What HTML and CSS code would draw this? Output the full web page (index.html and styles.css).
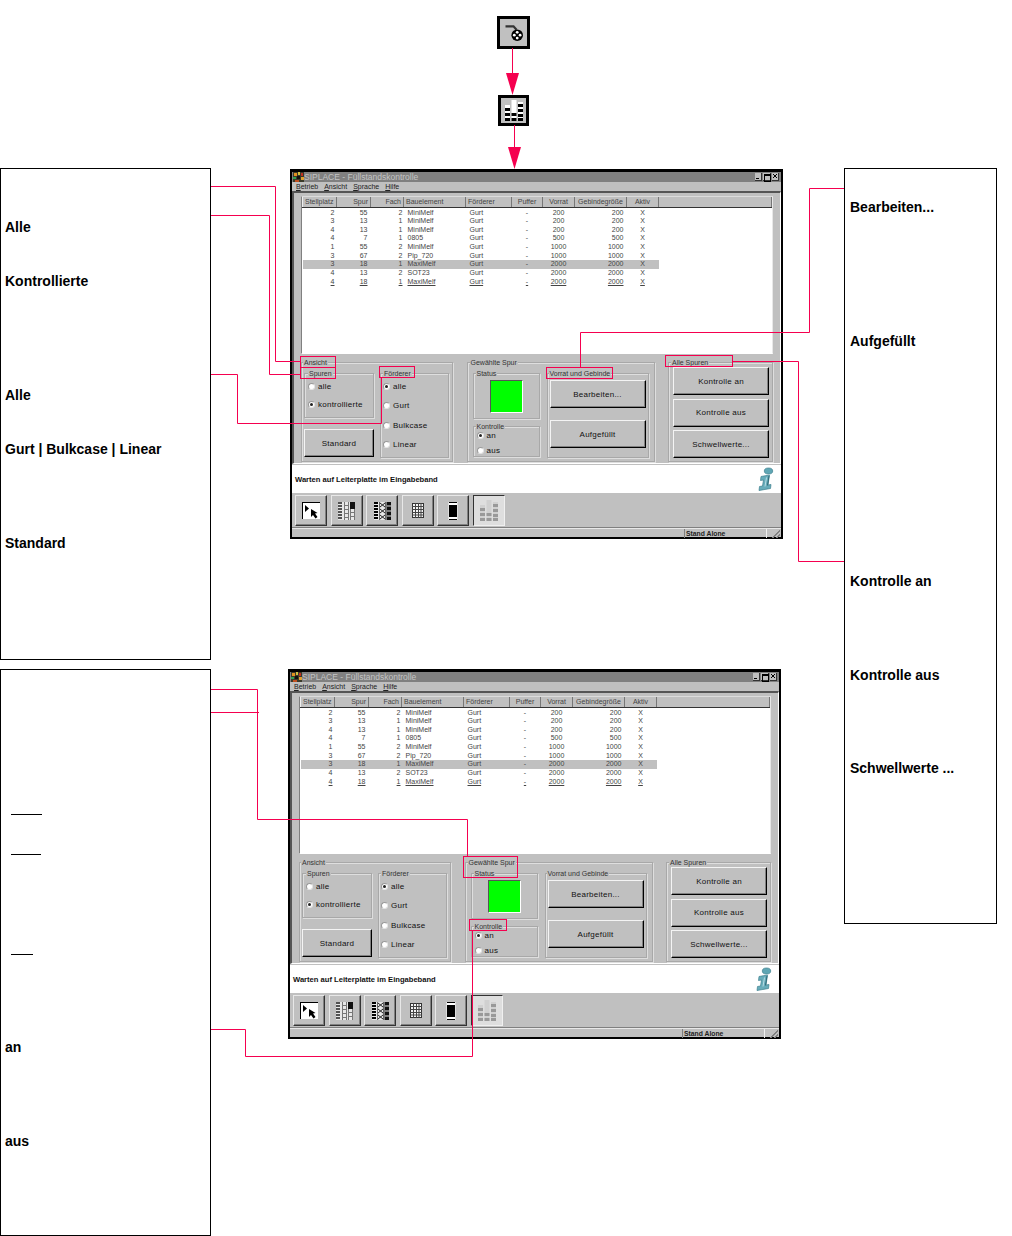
FILE: index.html
```html
<!DOCTYPE html>
<html lang="de">
<head>
    <meta charset="UTF-8">
    <meta name="viewport" content="width=device-width, initial-scale=1.0">
    <title>SIPLACE - Füllstandskontrolle</title>
    <link rel="stylesheet" href="styles.css">
</head>
<body>
<svg class="icon-defs" width="0" height="0">
    <symbol id="icon-app" viewBox="0 0 11 10">
        <rect width="11" height="10" fill="#3a3a2a"/>
        <rect x="1" y="1" width="3" height="3" fill="#e09020"/>
        <rect x="5" y="0" width="2" height="3" fill="#d0c040"/>
        <rect x="8" y="1" width="2" height="3" fill="#c03020"/>
        <rect x="0" y="5" width="3" height="2" fill="#30a050"/>
        <rect x="4" y="4" width="3" height="3" fill="#101010"/>
        <rect x="8" y="5" width="3" height="3" fill="#e0a030"/>
        <rect x="2" y="8" width="4" height="2" fill="#c05020"/>
    </symbol>
    <symbol id="icon-select" viewBox="0 0 18 17">
        <rect width="18" height="17" fill="#fff"/>
        <rect width="18" height="1" fill="#000"/>
        <rect width="1" height="17" fill="#000"/>
        <polygon points="3,3 3,10 7,6.5" fill="#000"/>
        <polygon points="9,7 9,15 11,13 13.5,16.5 15.5,15 13,11.5 15.5,11" fill="#000"/>
    </symbol>
    <symbol id="icon-tracks" viewBox="0 0 17 18">
        <rect width="17" height="18" fill="#e8e8e8"/>
        <path d="M0 1h4M0 4h4M0 7h4M0 10h4M0 13h4M0 16h4" stroke="#222" stroke-width="1.600"/>
        <path d="M6.500 0v18M10.500 0v18M6 3.500h5M6 7.500h5M6 11.500h5M6 15.500h5" stroke="#777" fill="none"/>
        <rect x="12" y="0" width="5" height="7" fill="#111"/>
        <path d="M12.500 7v11M16.500 7v11M12 10.500h5M12 14.500h5" stroke="#777" fill="none"/>
    </symbol>
    <symbol id="icon-tracks-x" viewBox="0 0 17 18">
        <rect width="17" height="18" fill="#e8e8e8"/>
        <path d="M0 1h4M0 4h4M0 7h4M0 10h4M0 13h4M0 16h4" stroke="#000" stroke-width="2"/>
        <path d="M6 1l5 4M11 1l-5 4M6 7l5 4M11 7l-5 4M6 13l5 4M11 13l-5 4" stroke="#222"/>
        <path d="M5.500 0v18M11.500 0v18" stroke="#666"/>
        <rect x="12.500" y="0" width="4.500" height="18" fill="#111"/>
        <path d="M13 4h4M13 9h4M13 14h4" stroke="#e8e8e8"/>
    </symbol>
    <symbol id="icon-grid" viewBox="0 0 12 15">
        <rect x=".5" y=".5" width="11" height="14" fill="#f4f4f4" stroke="#333"/>
        <path d="M3.500 0v15M6.500 0v15M9 0v15M0 3.500h12M0 6.500h12M0 9.500h12M0 12h12" stroke="#444" fill="none"/>
    </symbol>
    <symbol id="icon-reel" viewBox="0 0 10 18">
        <rect width="10" height="18" fill="#000"/>
        <rect x="1" y="1" width="8" height="2" fill="#fff"/>
        <rect x="1" y="15" width="8" height="2" fill="#fff"/>
        <rect x="0" y="0" width="1" height="18" fill="#ddd"/>
        <rect x="9" y="0" width="1" height="18" fill="#ddd"/>
    </symbol>
    <symbol id="icon-chart" viewBox="0 0 18 21">
        <rect class="chart-col" x="0" y="5" width="5" height="16"/>
        <rect class="chart-col" x="6.500" y="0" width="5" height="21"/>
        <rect class="chart-col" x="13" y="2" width="5" height="19"/>
        <path class="chart-bar" d="M0 8h5v3H0zM0 13h5v3H0zM0 18h5v3H0zM6.500 13h5v3h-5zM6.500 18h5v3h-5zM13 4h5v3h-5zM13 9h5v3h-5zM13 14h5v3h-5zM13 18h5v3h-5z"/>
    </symbol>
    <symbol id="icon-wheel" viewBox="0 0 24 20">
        <path d="M3.500 3.300h8l3 3.500" fill="none" stroke="#333" stroke-width="2.200"/>
        <circle cx="15.200" cy="12.200" r="5.800" fill="#000"/>
        <circle cx="15.200" cy="9.300" r="1.400" fill="#fff"/>
        <circle cx="15.200" cy="15.100" r="1.400" fill="#fff"/>
        <circle cx="12.300" cy="12.200" r="1.400" fill="#fff"/>
        <circle cx="18.100" cy="12.200" r="1.400" fill="#fff"/>
    </symbol>
    <symbol id="icon-info" viewBox="0 0 18 24">
        <ellipse cx="11.500" cy="4" rx="4.200" ry="3" fill="#5fa6b4" stroke="#3d7f8e" stroke-width=".7"/>
        <path d="M4 9.500l8.500-1.500-1.500 10 3-.5-.5 4L2 23.500l.5-4 3-.5 1-6-3 .5z" fill="#67acba" stroke="#3d7f8e" stroke-width=".7"/>
        <path d="M9.500 10.500l-1.500 9" stroke="#b8dde4" fill="none"/>
        <path d="M12 9l-1.500 9.500" stroke="#2f6a78" fill="none"/>
    </symbol>
</svg>

<main class="page">
    <div class="tile tile-top"><svg class="tile-wheel"><use href="#icon-wheel"/></svg></div>
    <div class="tile tile-chart"><svg class="tile-bars"><use href="#icon-chart"/></svg></div>

    <aside class="note note-left-top">
        <p class="mt-48">Alle</p>
        <p class="mt-34">Kontrollierte</p>
        <p class="mt-94">Alle</p>
        <p class="mt-34">Gurt | Bulkcase | Linear</p>
        <p class="mt-74">Standard</p>
    </aside>

    <aside class="note note-right">
        <p class="mt-28">Bearbeiten...</p>
        <p class="mt-114">Aufgefüllt</p>
        <p class="mt-220">Kontrolle an</p>
        <p class="mt-74">Kontrolle aus</p>
        <p class="mt-73">Schwellwerte ...</p>
    </aside>

    <aside class="note note-left-bottom">
        <div class="rule rule-31 mt-144"></div>
        <div class="rule rule-30 mt-39"></div>
        <div class="rule rule-22 mt-99"></div>
        <p class="mt-82">an</p>
        <p class="mt-74">aus</p>
    </aside>

    <!-- erstes Fenster -->
    <section class="window window-top">
        <header class="titlebar">
            <svg class="app-icon"><use href="#icon-app"/></svg>
            <span class="title-text">SIPLACE - Füllstandskontrolle</span>
            <span class="title-buttons"><b class="min"></b><b class="max"></b><b class="close"></b></span>
        </header>
        <nav class="menu"><span><u>B</u>etrieb</span><span><u>A</u>nsicht</span><span><u>S</u>prache</span><span><u>H</u>ilfe</span></nav>
        <div class="client">
            <div class="table-wrap">
                <table class="slots">
                    <thead>
                        <tr><th>Stellplatz</th><th class="right">Spur</th><th class="right">Fach</th><th>Bauelement</th><th>Förderer</th><th>Puffer</th><th>Vorrat</th><th>Gebindegröße</th><th>Aktiv</th><th></th></tr>
                    </thead>
                    <tbody>
                        <tr><td>2</td><td>55</td><td>2</td><td>MiniMelf</td><td>Gurt</td><td>-</td><td>200</td><td>200</td><td>X</td><td></td></tr>
                        <tr><td>3</td><td>13</td><td>1</td><td>MiniMelf</td><td>Gurt</td><td>-</td><td>200</td><td>200</td><td>X</td><td></td></tr>
                        <tr><td>4</td><td>13</td><td>1</td><td>MiniMelf</td><td>Gurt</td><td>-</td><td>200</td><td>200</td><td>X</td><td></td></tr>
                        <tr><td>4</td><td>7</td><td>1</td><td>0805</td><td>Gurt</td><td>-</td><td>500</td><td>500</td><td>X</td><td></td></tr>
                        <tr><td>1</td><td>55</td><td>2</td><td>MiniMelf</td><td>Gurt</td><td>-</td><td>1000</td><td>1000</td><td>X</td><td></td></tr>
                        <tr><td>3</td><td>67</td><td>2</td><td>Pip_720</td><td>Gurt</td><td>-</td><td>1000</td><td>1000</td><td>X</td><td></td></tr>
                        <tr class="selected"><td>3</td><td>18</td><td>1</td><td>MaxiMelf</td><td>Gurt</td><td>-</td><td>2000</td><td>2000</td><td>X</td><td></td></tr>
                        <tr><td>4</td><td>13</td><td>2</td><td>SOT23</td><td>Gurt</td><td>-</td><td>2000</td><td>2000</td><td>X</td><td></td></tr>
                        <tr class="marked"><td>4</td><td>18</td><td>1</td><td>MaxiMelf</td><td>Gurt</td><td>-</td><td>2000</td><td>2000</td><td>X</td><td></td></tr>
                    </tbody>
                </table>
            </div>
            <div class="panels">
                <div class="group group-view">
                    <span class="legend">Ansicht</span>
                    <div class="view-left">
                        <div class="group group-tracks">
                            <span class="legend">Spuren</span>
                            <label class="radio-row"><i class="radio"></i>alle</label>
                            <label class="radio-row"><i class="radio checked"></i>kontrollierte</label>
                        </div>
                        <button class="btn btn-standard" type="button">Standard</button>
                    </div>
                    <div class="group group-feeder">
                        <span class="legend">Förderer</span>
                        <label class="radio-row"><i class="radio checked"></i>alle</label>
                        <label class="radio-row"><i class="radio"></i>Gurt</label>
                        <label class="radio-row"><i class="radio"></i>Bulkcase</label>
                        <label class="radio-row"><i class="radio"></i>Linear</label>
                    </div>
                </div>
                <div class="group group-selected">
                    <span class="legend">Gewählte Spur</span>
                    <div class="selected-left">
                        <div class="group group-status">
                            <span class="legend">Status</span>
                            <div class="lamp"></div>
                        </div>
                        <div class="group group-control">
                            <span class="legend">Kontrolle</span>
                            <label class="radio-row"><i class="radio checked"></i>an</label>
                            <label class="radio-row"><i class="radio"></i>aus</label>
                        </div>
                    </div>
                    <div class="group group-stock">
                        <span class="legend">Vorrat und Gebinde</span>
                        <button class="btn" type="button">Bearbeiten...</button>
                        <button class="btn" type="button">Aufgefüllt</button>
                    </div>
                </div>
                <div class="group group-all">
                    <span class="legend">Alle Spuren</span>
                    <button class="btn" type="button">Kontrolle an</button>
                    <button class="btn" type="button">Kontrolle aus</button>
                    <button class="btn" type="button">Schwellwerte...</button>
                </div>
            </div>
        </div>
        <div class="message">
            <span>Warten auf Leiterplatte im Eingabeband</span>
            <svg class="info-icon"><use href="#icon-info"/></svg>
        </div>
        <div class="toolbar">
            <button class="tool" type="button"><svg class="tool-select"><use href="#icon-select"/></svg></button>
            <button class="tool" type="button"><svg class="tool-tracks"><use href="#icon-tracks"/></svg></button>
            <button class="tool" type="button"><svg class="tool-tracks"><use href="#icon-tracks-x"/></svg></button>
            <button class="tool" type="button"><svg class="tool-grid"><use href="#icon-grid"/></svg></button>
            <button class="tool" type="button"><svg class="tool-reel"><use href="#icon-reel"/></svg></button>
            <button class="tool tool-active" type="button"><svg class="tool-chart"><use href="#icon-chart"/></svg></button>
        </div>
        <footer class="statusbar"><span class="status-cell">Stand Alone</span></footer>
    </section>

    <!-- zweites Fenster -->
    <section class="window window-bottom">
        <header class="titlebar">
            <svg class="app-icon"><use href="#icon-app"/></svg>
            <span class="title-text">SIPLACE - Füllstandskontrolle</span>
            <span class="title-buttons"><b class="min"></b><b class="max"></b><b class="close"></b></span>
        </header>
        <nav class="menu"><span><u>B</u>etrieb</span><span><u>A</u>nsicht</span><span><u>S</u>prache</span><span><u>H</u>ilfe</span></nav>
        <div class="client">
            <div class="table-wrap">
                <table class="slots">
                    <thead>
                        <tr><th>Stellplatz</th><th class="right">Spur</th><th class="right">Fach</th><th>Bauelement</th><th>Förderer</th><th>Puffer</th><th>Vorrat</th><th>Gebindegröße</th><th>Aktiv</th><th></th></tr>
                    </thead>
                    <tbody>
                        <tr><td>2</td><td>55</td><td>2</td><td>MiniMelf</td><td>Gurt</td><td>-</td><td>200</td><td>200</td><td>X</td><td></td></tr>
                        <tr><td>3</td><td>13</td><td>1</td><td>MiniMelf</td><td>Gurt</td><td>-</td><td>200</td><td>200</td><td>X</td><td></td></tr>
                        <tr><td>4</td><td>13</td><td>1</td><td>MiniMelf</td><td>Gurt</td><td>-</td><td>200</td><td>200</td><td>X</td><td></td></tr>
                        <tr><td>4</td><td>7</td><td>1</td><td>0805</td><td>Gurt</td><td>-</td><td>500</td><td>500</td><td>X</td><td></td></tr>
                        <tr><td>1</td><td>55</td><td>2</td><td>MiniMelf</td><td>Gurt</td><td>-</td><td>1000</td><td>1000</td><td>X</td><td></td></tr>
                        <tr><td>3</td><td>67</td><td>2</td><td>Pip_720</td><td>Gurt</td><td>-</td><td>1000</td><td>1000</td><td>X</td><td></td></tr>
                        <tr class="selected"><td>3</td><td>18</td><td>1</td><td>MaxiMelf</td><td>Gurt</td><td>-</td><td>2000</td><td>2000</td><td>X</td><td></td></tr>
                        <tr><td>4</td><td>13</td><td>2</td><td>SOT23</td><td>Gurt</td><td>-</td><td>2000</td><td>2000</td><td>X</td><td></td></tr>
                        <tr class="marked"><td>4</td><td>18</td><td>1</td><td>MaxiMelf</td><td>Gurt</td><td>-</td><td>2000</td><td>2000</td><td>X</td><td></td></tr>
                    </tbody>
                </table>
            </div>
            <div class="panels">
                <div class="group group-view">
                    <span class="legend">Ansicht</span>
                    <div class="view-left">
                        <div class="group group-tracks">
                            <span class="legend">Spuren</span>
                            <label class="radio-row"><i class="radio"></i>alle</label>
                            <label class="radio-row"><i class="radio checked"></i>kontrollierte</label>
                        </div>
                        <button class="btn btn-standard" type="button">Standard</button>
                    </div>
                    <div class="group group-feeder">
                        <span class="legend">Förderer</span>
                        <label class="radio-row"><i class="radio checked"></i>alle</label>
                        <label class="radio-row"><i class="radio"></i>Gurt</label>
                        <label class="radio-row"><i class="radio"></i>Bulkcase</label>
                        <label class="radio-row"><i class="radio"></i>Linear</label>
                    </div>
                </div>
                <div class="group group-selected">
                    <span class="legend">Gewählte Spur</span>
                    <div class="selected-left">
                        <div class="group group-status">
                            <span class="legend">Status</span>
                            <div class="lamp"></div>
                        </div>
                        <div class="group group-control">
                            <span class="legend">Kontrolle</span>
                            <label class="radio-row"><i class="radio checked"></i>an</label>
                            <label class="radio-row"><i class="radio"></i>aus</label>
                        </div>
                    </div>
                    <div class="group group-stock">
                        <span class="legend">Vorrat und Gebinde</span>
                        <button class="btn" type="button">Bearbeiten...</button>
                        <button class="btn" type="button">Aufgefüllt</button>
                    </div>
                </div>
                <div class="group group-all">
                    <span class="legend">Alle Spuren</span>
                    <button class="btn" type="button">Kontrolle an</button>
                    <button class="btn" type="button">Kontrolle aus</button>
                    <button class="btn" type="button">Schwellwerte...</button>
                </div>
            </div>
        </div>
        <div class="message">
            <span>Warten auf Leiterplatte im Eingabeband</span>
            <svg class="info-icon"><use href="#icon-info"/></svg>
        </div>
        <div class="toolbar">
            <button class="tool" type="button"><svg class="tool-select"><use href="#icon-select"/></svg></button>
            <button class="tool" type="button"><svg class="tool-tracks"><use href="#icon-tracks"/></svg></button>
            <button class="tool" type="button"><svg class="tool-tracks"><use href="#icon-tracks-x"/></svg></button>
            <button class="tool" type="button"><svg class="tool-grid"><use href="#icon-grid"/></svg></button>
            <button class="tool" type="button"><svg class="tool-reel"><use href="#icon-reel"/></svg></button>
            <button class="tool tool-active" type="button"><svg class="tool-chart"><use href="#icon-chart"/></svg></button>
        </div>
        <footer class="statusbar"><span class="status-cell">Stand Alone</span></footer>
    </section>

    <!-- rote Verbindungslinien liegen ueber allem -->
    <svg class="connectors" width="1012" height="1236" viewBox="0 0 1012 1236">
        <g class="links">
            <path d="M512.500 48V73M514.500 125V148"/>
            <path d="M211 186.500H275.500V361.500H300.500"/>
            <path d="M211 215.500H269.500V374.500H300.500"/>
            <path d="M211 374.500H237.500V423.500H381.500V377.500"/>
            <path d="M580.500 367.500V332.500H809.500V188.500H844"/>
            <path d="M732.500 361.500H798.500V561.500H844"/>
            <rect x="300.500" y="356.500" width="35" height="11"/>
            <rect x="300.500" y="367.500" width="35" height="11"/>
            <rect x="379.500" y="366.500" width="35" height="11"/>
            <rect x="546.500" y="367.500" width="66" height="11"/>
            <rect x="665.500" y="355.500" width="67" height="11"/>
            <path d="M211 689.500H257.500V819.500H467.500V856.500"/>
            <path d="M211 712.500H259"/>
            <path d="M211 1029.500H245.500V1056.500H472.500V930"/>
            <rect x="463.500" y="856.500" width="54" height="21"/>
            <rect x="469.500" y="919.500" width="37" height="11"/>
        </g>
        <polygon class="arrow" points="506,73 519,73 512.500,95"/>
        <polygon class="arrow" points="508,147 521,147 514.500,169"/>
    </svg>
</main>
</body>
</html>
```

FILE: styles.css
```css
* {
    box-sizing: border-box;
}
body {
    margin: 0;
    background-color: #fff;
    font-family: "Liberation Sans", Arial, sans-serif;
    color: #000;
}
.icon-defs {
    position: absolute;
}
.page {
    position: relative;
    width: 1012px;
    height: 1236px;
    overflow: hidden;
}

/* margins between the note lines */
.mt-28 { margin-top: 28px; }
.mt-34 { margin-top: 34px; }
.mt-39 { margin-top: 39px; }
.mt-48 { margin-top: 48px; }
.mt-73 { margin-top: 73px; }
.mt-74 { margin-top: 74px; }
.mt-82 { margin-top: 82px; }
.mt-94 { margin-top: 94px; }
.mt-99 { margin-top: 99px; }
.mt-114 { margin-top: 114px; }
.mt-144 { margin-top: 144px; }
.mt-220 { margin-top: 220px; }

/* text boxes around the windows */
.note {
    position: absolute;
    border: 1px solid #000;
    padding-left: 4px;
    font-size: 14px;
    font-weight: bold;
    line-height: 20px;
    background-color: #fff;
}
.note p {
    margin-bottom: 0;
    margin-left: 0;
    margin-right: 0;
}
.note-left-top {
    left: 0;
    top: 168px;
    width: 211px;
    height: 492px;
}
.note-right {
    left: 844px;
    top: 168px;
    width: 153px;
    height: 756px;
    padding-left: 5px;
}
.note-left-bottom {
    left: 0;
    top: 669px;
    width: 211px;
    height: 567px;
}
.rule {
    height: 1px;
    margin-left: 6px;
    background-color: #000;
}
.rule-31 { width: 31px; }
.rule-30 { width: 30px; }
.rule-22 { width: 22px; }

/* the two toolbar tiles on top */
.tile {
    position: absolute;
    background-color: #c0c0c0;
    border: 3px solid #000;
    display: flex;
    align-items: center;
    justify-content: center;
}
.tile-top {
    left: 497px;
    top: 16px;
    width: 33px;
    height: 33px;
}
.tile-chart {
    left: 498px;
    top: 95px;
    width: 31px;
    height: 31px;
    --chart-col: #fff;
    --chart-bar: #000;
}
.tile-wheel {
    width: 24px;
    height: 20px;
}
.tile-bars {
    width: 18px;
    height: 21px;
}
.chart-col {
    fill: var(--chart-col);
}
.chart-bar {
    fill: var(--chart-bar);
}

/* window */
.window {
    position: absolute;
    width: 493px;
    height: 370px;
    border: 2px solid #000;
    border-top-width: 3px;
    background-color: #c0c0c0;
    display: flex;
    flex-direction: column;
}
.window-top {
    left: 290px;
    top: 169px;
}
.window-bottom {
    left: 288px;
    top: 669px;
}
.titlebar {
    height: 10px;
    flex: none;
    background-color: #808080;
    display: flex;
    align-items: center;
    padding: 0 2px 0 1px;
    font-size: 8.500px;
    color: #c4c4c4;
}
.app-icon {
    width: 11px;
    height: 10px;
}
.title-text {
    flex: 1;
}
.title-buttons {
    display: flex;
    gap: 1px;
}
.title-buttons b {
    position: relative;
    display: block;
    width: 7px;
    height: 8px;
    background-color: #c0c0c0;
    border-right: 1px solid #333;
    border-bottom: 1px solid #333;
}
.title-buttons .min::after {
    content: "";
    position: absolute;
    left: 1px;
    bottom: 1px;
    width: 3px;
    height: 1px;
    background-color: #000;
}
.title-buttons .max {
    width: 8px;
}
.title-buttons .max::after {
    content: "";
    position: absolute;
    left: 1px;
    top: 1px;
    width: 5px;
    height: 5px;
    border: 1px solid #000;
    border-top-width: 2px;
}
.title-buttons .close::after {
    content: "";
    position: absolute;
    left: 1px;
    top: 1px;
    width: 4px;
    height: 4px;
    background: linear-gradient(45deg, transparent 40%, #000 40% 60%, transparent 60%),
        linear-gradient(-45deg, transparent 40%, #000 40% 60%, transparent 60%);
}
.menu {
    height: 9px;
    flex: none;
    display: flex;
    gap: 6px;
    padding-left: 4px;
    font-size: 7px;
    line-height: 9px;
    color: #222;
}

.client {
    height: 273px;
    flex: none;
    border-top: 2px solid #555;
    border-left: 2px solid #555;
    border-right: 1px solid #fff;
    border-bottom: 1px solid #fff;
    padding: 3px 7px 0;
}
.table-wrap {
    height: 158px;
    background-color: #fff;
    border-left: 1px solid #808080;
    border-top: 1px solid #dcdcdc;
    border-right: 1px solid #e8e8e8;
    border-bottom: 1px solid #fff;
}
.slots {
    table-layout: fixed;
    border-collapse: collapse;
    width: 470px;
    font-size: 7px;
    color: #444;
}
.slots th:nth-child(1) { width: 34px; }
.slots th:nth-child(2) { width: 34px; }
.slots th:nth-child(3) { width: 33px; }
.slots th:nth-child(4) { width: 62px; }
.slots th:nth-child(5) { width: 46px; }
.slots th:nth-child(6) { width: 31px; }
.slots th:nth-child(7) { width: 32px; }
.slots th:nth-child(8) { width: 52px; }
.slots th:nth-child(9) { width: 32px; }
.slots th {
    height: 10px;
    padding: 0 2px;
    font-weight: normal;
    line-height: 9px;
    background-color: #c0c0c0;
    border-left: 1px solid #eee;
    border-right: 1px solid #777;
    border-bottom: 1px solid #333;
    text-align: left;
    white-space: nowrap;
}
.slots th.right {
    text-align: right;
}
.slots th:nth-child(6),
.slots th:nth-child(7),
.slots th:nth-child(8),
.slots th:nth-child(9) {
    text-align: center;
    padding: 0;
}
.slots td {
    height: 8.670px;
    padding: 0;
    line-height: 8px;
    white-space: nowrap;
}
.slots tbody tr:first-child td {
    padding-top: 1px;
    height: 9.670px;
}
.slots td:nth-child(1) { text-align: right; padding-right: 2px; }
.slots td:nth-child(2) { text-align: right; padding-right: 3px; }
.slots td:nth-child(3) { text-align: right; padding-right: 1px; }
.slots td:nth-child(4) { padding-left: 4px; }
.slots td:nth-child(5) { padding-left: 4px; }
.slots td:nth-child(6),
.slots td:nth-child(7),
.slots td:nth-child(9) { text-align: center; }
.slots td:nth-child(8) { text-align: right; padding-right: 3px; }
.slots .selected td {
    background-color: #c0c0c0;
}
.slots .selected td:last-child {
    background-color: #fff;
}
.slots .marked td {
    text-decoration: underline;
}

/* group boxes */
.panels {
    display: flex;
    justify-content: space-between;
    margin-top: 8px;
    height: 100px;
}
.group {
    position: relative;
    border: 1px solid #a8a8a8;
    box-shadow: 1px 1px 0 #dedede, inset 1px 1px 0 #dedede;
}
.legend {
    position: absolute;
    left: 2px;
    top: -4px;
    padding: 0 1px;
    background-color: #c0c0c0;
    font-size: 7px;
    line-height: 7px;
    color: #333;
    white-space: nowrap;
}
.group-view {
    width: 152px;
    display: flex;
    gap: 6px;
    padding: 10px 0 0 2px;
}
.group-view > .legend,
.group-stock > .legend {
    left: 1px;
}
.view-left {
    width: 70px;
    display: flex;
    flex-direction: column;
    gap: 11px;
}
.group-tracks {
    height: 45px;
    display: flex;
    flex-direction: column;
    gap: 6.500px;
    padding: 6px 0 0 3px;
}
.group-tracks > .legend {
    left: 3px;
}
.group-feeder {
    width: 69px;
    height: 85px;
    display: flex;
    flex-direction: column;
    gap: 7.500px;
    padding: 6px 0 0 2px;
}
.group-selected {
    width: 188px;
    display: flex;
    gap: 7px;
    padding: 10px 0 0 5px;
}
.selected-left {
    width: 67px;
    display: flex;
    flex-direction: column;
    gap: 7px;
}
.group-status {
    height: 46px;
    display: flex;
    justify-content: center;
    padding: 6px 0 0 1px;
}
.lamp {
    width: 33px;
    height: 33px;
    background-color: #00ff00;
    border: 1px solid;
    border-color: #555 #fff #fff #555;
}
.group-control {
    height: 31px;
    display: flex;
    flex-direction: column;
    gap: 3px;
    padding: 2px 0 0 3px;
}
.group-stock {
    width: 102px;
    height: 85px;
    display: flex;
    flex-direction: column;
    gap: 12px;
    padding: 6px 0 0 2px;
}
.group-all {
    width: 105px;
    display: flex;
    flex-direction: column;
    gap: 3.500px;
    padding: 4px 0 0 4px;
}

.radio-row {
    display: flex;
    align-items: center;
    height: 12px;
    gap: 3px;
    font-size: 8px;
    letter-spacing: .25px;
    color: #111;
    white-space: nowrap;
}
.radio {
    position: relative;
    width: 7px;
    height: 7px;
    flex: none;
    border-radius: 50%;
    background-color: #fff;
    border: 1px solid;
    border-color: #999 #e4e4e4 #e4e4e4 #999;
}
.radio.checked::after {
    content: "";
    position: absolute;
    left: 1px;
    top: 1px;
    width: 3px;
    height: 3px;
    border-radius: 50%;
    background-color: #222;
}

/* raised buttons */
.btn {
    width: 96px;
    height: 28px;
    flex: none;
    padding: 0;
    background-color: #c0c0c0;
    border: 1px solid;
    border-color: #f4f4f4 #000 #000 #f4f4f4;
    box-shadow: inset -1px -1px 0 #808080;
    font-family: inherit;
    font-size: 8px;
    letter-spacing: .25px;
    color: #111;
}
.btn-standard {
    width: 70px;
}

/* message strip */
.message {
    height: 28px;
    flex: none;
    margin-top: 1px;
    background-color: #fff;
    display: flex;
    align-items: center;
    justify-content: space-between;
    padding: 0 6px 0 3px;
    font-size: 7.600px;
    font-weight: bold;
    color: #111;
}
.info-icon {
    width: 18px;
    height: 24px;
}

/* toolbar */
.toolbar {
    height: 34px;
    flex: none;
    display: flex;
    gap: 3.600px;
    padding: 2px 0 0 3px;
}
.tool {
    width: 32px;
    height: 31px;
    padding: 0;
    background-color: #c0c0c0;
    border: 1px solid;
    border-color: #e8e8e8 #333 #333 #e8e8e8;
    box-shadow: inset -1px -1px 0 #808080;
    display: flex;
    align-items: center;
    justify-content: center;
}
.tool-active {
    border-color: #333 #f0f0f0 #f0f0f0 #333;
    box-shadow: none;
    background-color: #dedede;
    --chart-col: #d0d0d0;
    --chart-bar: #999;
}
.tool-select { width: 18px; height: 17px; }
.tool-tracks { width: 17px; height: 18px; }
.tool-grid { width: 12px; height: 15px; }
.tool-reel { width: 10px; height: 18px; }
.tool-chart { width: 18px; height: 21px; }

/* status bar */
.statusbar {
    flex: 1;
    border-top: 1px solid #808080;
    box-shadow: inset 0 1px 0 #e8e8e8;
    display: flex;
    justify-content: flex-end;
    padding-top: 1px;
}
.status-cell {
    width: 83px;
    border-left: 1px solid #808080;
    border-right: 1px solid #eee;
    padding-left: 1px;
    font-size: 6.800px;
    font-weight: bold;
    line-height: 9px;
    color: #222;
}
.statusbar::after {
    content: "";
    width: 9px;
    height: 9px;
    margin: 0 1px 0 4px;
    background: repeating-linear-gradient(135deg, transparent 0 1.400px, #808080 1.400px 2.800px);
    clip-path: polygon(100% 0, 100% 100%, 0 100%);
}

/* connector overlay */
.connectors {
    position: absolute;
    left: 0;
    top: 0;
    pointer-events: none;
}
.links path,
.links rect {
    fill: none;
    stroke: #f5004f;
    stroke-width: 1;
}
.arrow {
    fill: #f5004f;
}
```
